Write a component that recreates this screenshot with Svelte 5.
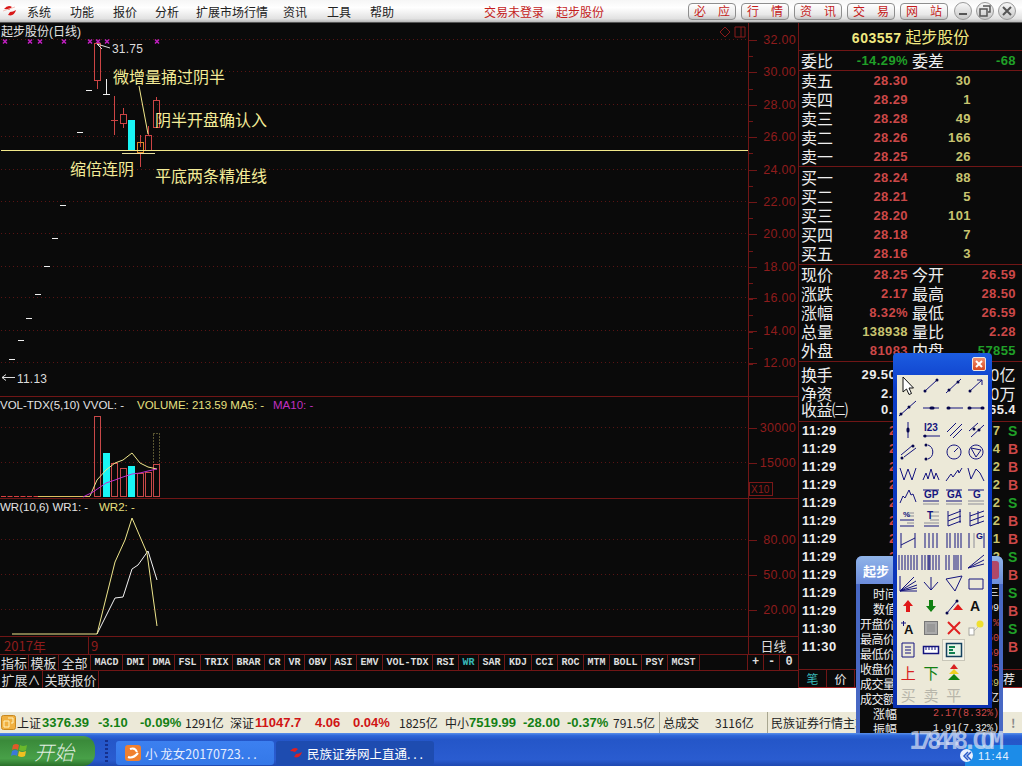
<script>
  // terminal data, positions taken from the screenshot
  const menus = [['系统', 43], ['功能', 43], ['报价', 42], ['分析', 41], ['扩展市场行情', 87], ['资讯', 44], ['工具', 43], ['帮助', 24]];
  const linkBtns = ['必　应', '行　情', '资　讯', '交　易', '网　站'];

  const priceAxis = [
    ['32.00', 40], ['30.00', 72], ['28.00', 105], ['26.00', 137], ['24.00', 170], ['22.00', 202],
    ['20.00', 234], ['18.00', 267], ['16.00', 298], ['14.00', 331], ['12.00', 363],
    ['30000', 428], ['15000', 463], ['80.00', 540], ['50.00', 575], ['20.00', 610]
  ];
  const axisTicks = [];
  for (let y = 40; y <= 380; y += 16.2) axisTicks.push(Math.round(y));
  const marks = [5, 30, 40, 64, 90, 98, 107, 157];
  const stairs = [[60, 205], [52, 238], [44, 266], [35, 294], [26, 318], [18, 340], [9, 359], [77, 132], [86, 90]];

  const volBars = [
    [94, 416, 0], [103, 453, 1], [111, 463, 0], [120, 468, 0],
    [128, 466, 1], [137, 473, 0], [145, 472, 0], [153, 464, 0]
  ];

  const tabs = [
    ['指标', 29, 'zh'], ['模板', 30, 'zh'], ['全部', 32, 'zh'], ['MACD', 32], ['DMI', 26], ['DMA', 26],
    ['FSL', 26], ['TRIX', 32], ['BRAR', 32], ['CR', 20], ['VR', 20], ['OBV', 26], ['ASI', 26], ['EMV', 26],
    ['VOL-TDX', 50], ['RSI', 26], ['WR', 20, 'on'], ['SAR', 26], ['KDJ', 27], ['CCI', 26], ['ROC', 26],
    ['MTM', 26], ['BOLL', 32], ['PSY', 26], ['MCST', 32]
  ];

  const sells = [['卖五', '28.30', '30'], ['卖四', '28.29', '1'], ['卖三', '28.28', '49'], ['卖二', '28.26', '166'], ['卖一', '28.25', '26']];
  const buys = [['买一', '28.24', '88'], ['买二', '28.21', '5'], ['买三', '28.20', '101'], ['买四', '28.18', '7'], ['买五', '28.16', '3']];
  const info = [
    ['现价', '28.25', 'r', '今开', '26.59', 'r'],
    ['涨跌', '2.17', 'r', '最高', '28.50', 'r'],
    ['涨幅', '8.32%', 'r', '最低', '26.59', 'r'],
    ['总量', '138938', 'y', '量比', '2.28', 'r'],
    ['外盘', '81083', 'r', '内盘', '57855', 'g']
  ];
  const extra = [['换手', '29.50%', '金额', '3.70亿'], ['净资', '2.51', '流通', '4900万'], ['收益㈡', '0.27', '市盈', '65.4']];
  const ticks = [
    ['11:29', '7', 'S'], ['11:29', '4', 'B'], ['11:29', '2', 'B'], ['11:29', '2', 'B'], ['11:29', '2', 'S'],
    ['11:29', '2', 'B'], ['11:29', '1', 'B'], ['11:29', '3', 'S'], ['11:29', '2', 'B'], ['11:29', '5', 'S'],
    ['11:29', '2', 'B'], ['11:30', '3', 'S'], ['11:30', '6', 'B']
  ];

  const status = [
    ['上证', 25, 'k'], ['3376.39', 56, 'g'], ['-3.10', 42, 'g'], ['-0.09%', 45, 'g'], ['1291亿', 45, 'k'],
    ['深证', 25, 'k'], ['11047.7', 60, 'r'], ['4.06', 38, 'r'], ['0.04%', 46, 'r'], ['1825亿', 46, 'k'],
    ['中小', 24, 'k'], ['7519.99', 54, 'g'], ['-28.00', 44, 'g'], ['-0.37%', 46, 'g'], ['791.5亿', 46, 'k']
  ];

  const infoRows = [
    ['时间', '三', 'sub', 'w'], ['数值', '09', 'sub', 'w'], ['开盘价', '%', '', 'r'], ['最高价', '50', '', 'r'], ['最低价', '59', '', 'r'],
    ['收盘价', '25', '', 'r'], ['成交量', '39', '', 'y'], ['成交额', '亿', '', 'w'],
    ['涨幅', '2.17(8.32%)', 'sub', 'r'], ['振幅', '1.91(7.32%)', 'sub', 'w']
  ];

  const N = '#14147e';
  // d = stroke path, dots = heavy end points, t = small label
  const tools = [
    { cursor: true }, { d: 'M4 15L16 4', dots: 'M4 15h0M16 4h0' }, { d: 'M2 17L17 3', dots: 'M5 14h0M14 6h0' }, { d: 'M4 15L16 4M11 4h5v5', dots: 'M4 15h0' },
    { d: 'M1 18L18 3', dots: 'M3 16h0M11 9h0' }, { d: 'M2 10H18', dots: 'M10 10h2' }, { d: 'M5 10H19', dots: 'M4 10h1' }, { d: 'M3 10H17', dots: 'M3 10h1M16 10h1' },
    { d: 'M10 2V18', dots: 'M10 9v2' }, { d: 'M2 16H19', dots: 'M4 16h0', t: 'I23', ty: 11, ts: 10 }, { d: 'M3 12L12 3M6 16L18 4M9 18L18 9' }, { d: 'M3 11L12 3M5 17L18 5', dots: 'M8 9h0M13 10h0' },
    { d: 'M3 13L15 3M6 15L18 6', dots: 'M4 16h0M15 4h0' }, { d: 'M7 3A7.5 7.5 0 0 1 7 17', dots: 'M5 3h0M5 17h0' }, { d: 'M10 3a7 7 0 1 0 .01 0M10 10L14 6' }, { d: 'M10 3a7 7 0 1 0 .01 0M5 6L15 8L10 15Z' },
    { d: 'M2 4L6 16L10 5L14 16L18 4' }, { d: 'M2 16L5 9L7 15L10 5L13 15L15 9L18 16' }, { d: 'M2 17L7 10L9 13L14 6L15 9L18 4' }, { d: 'M2 4L5 15L10 5L14 9L18 17' },
    { d: 'M2 17L5 10L7 12L11 4L13 9L15 8L18 16' }, { d: 'M2 4H18M2 15H18', g: 'M2 18H18', t: 'GP', ty: 12, ts: 10 }, { d: 'M2 4H18M2 15H18', g: 'M2 18H18', t: 'GA', ty: 12, ts: 10 }, { d: 'M2 4H18', g: 'M2 15H18M2 18H18', t: 'G', ty: 12, ts: 10, tx: 7 },
    { d: 'M2 12H16M2 18H16', g: 'M9 5H16M9 8H16M9 15H16', t: '%', ty: 9, ts: 8, tx: 5 }, { d: 'M3 18H18', g: 'M9 4H18M9 8H18M9 12H18M3 15H18', t: 'T', ty: 11, ts: 10, tx: 6 }, { d: 'M4 3V18M16 1V15M4 8L17 3M4 13L17 8M4 18L17 13' }, { d: 'M4 4V18M12 3V16M4 8L18 3M4 13L18 8M4 18L18 13' },
    { d: 'M3 3V18M17 3V18M3 15L17 8' }, { d: 'M4 3V18M8 3V18M12 3V18M16 3V18' }, { d: 'M3 3V18M6 3V18M11 3V18M14 3V18M17 3V18' }, { d: 'M3 3V18M18 3V18', g: 'M8 3V18', t: 'G', ty: 9, ts: 9, tx: 10 },
    { d: 'M1 3V18M4 3V18M7 3V18M10 3V18M13 3V18M16 3V18M19 3V18' }, { d: 'M1 3V18M4 3V18M7 3V18M8 3V18M9 3V18M12 3V18M15 3V18M18 3V18' }, { d: 'M2 3V18M5 3V18M10 3V18M12 3V18M14 3V18M17 3V18' }, { d: 'M2 16L18 3M2 16L18 8M2 16L18 12' },
    { d: 'M2 2V17H19M2 17L16 3M2 17L18 7M2 17L19 11M2 17L19 14' }, { d: 'M10 3V16M3 8L10 16L17 8' }, { d: 'M2 5L18 2L11 17Z' }, { d: 'M3 5H17V15H3Z' },
    { red: 'M10 4L15 10H12V16H8V10H5Z' }, { green: 'M10 16L15 10H12V4H8V10H5Z' }, { d: 'M3 17L13 5', dots: 'M3 17h0M13 5h0', red: 'M14 8L19 14H9Z' }, { t: 'A', ty: 15, ts: 14, tx: 4, dark: true },
    { t: 'A', ty: 16, ts: 13, tx: 6, dark: true, d: 'M3 5H8M5.500 3V8' }, { square: true }, { redline: 'M4 4L16 16M16 4L4 16' }, { bulb: true },
    { d: 'M4 3H16V17H4ZM7 7H13M7 10H13M7 13H13' }, { ruler: true }, { chart: true }, {},
    { zh: '上', c: '#d82020' }, { zh: '下', c: '#128012' }, { arrows: true }, {},
    { zh: '买', c: '#b8b6aa' }, { zh: '卖', c: '#b8b6aa' }, { zh: '平', c: '#b8b6aa' }, {}
  ];
</script>

<div class="app">
  <header class="topbar">
    <svg class="logo" width="16" height="14" viewBox="0 0 16 14"><path d="M2 5Q6 0 10 3L7 6Q4 5 2 5ZM14 6Q12 13 6 11L8 8Q11 8 14 6Z" fill="#d81818"/><path d="M1 7L13 3" stroke="#f4c0b8"/></svg>
    <nav class="menus">
      {#each menus as [m, w]}<span style="width:{w}px">{m}</span>{/each}
    </nav>
    <span class="login">交易未登录</span>
    <span class="login stock">起步股份</span>
    <div class="links">
      {#each linkBtns as b}<span class="link">{b}</span>{/each}
    </div>
    <div class="winbtns">
      <span class="round"><svg width="12" height="12" viewBox="0 0 12 12"><path d="M2 9H10" stroke="#555" stroke-width="2"/></svg></span>
      <span class="round"><svg width="12" height="12" viewBox="0 0 12 12"><path d="M4 1H11V7H9M1 4H8V11H1Z" fill="none" stroke="#555" stroke-width="1.500"/></svg></span>
      <span class="round"><svg width="12" height="12" viewBox="0 0 12 12"><path d="M2 2L10 10M10 2L2 10" stroke="#555" stroke-width="2"/></svg></span>
    </div>
  </header>

  <main class="body">
    <section class="left">
      <svg class="chart" width="798" height="613" viewBox="0 23 798 613">
        <!-- grid -->
        {#each priceAxis as [, y]}
          <path d="M1 {y - 0.5}H748" class="dots"/>
        {/each}
        <path d="M748.500 23V636" class="frame"/>
        <path d="M0 396.500H798M0 498.500H798" class="frame"/>
        {#each axisTicks as y}<path d="M748 {y + 0.5}h5" class="frame"/>{/each}
        {#each priceAxis as [v, y]}
          <path d="M748 {y + 0.5}h9" class="frame"/>
          <text x="796" y={y + 4} text-anchor="end" class="axis">{v}</text>
        {/each}
        <path d="M725 27l5 5-5 5-5-5ZM735 27h10v10h-10ZM741 27v10" fill="none" stroke="#8a1a1a"/>
        <rect x="749.500" y="482.500" width="23" height="13" fill="none" stroke="#7a1818"/>
        <text x="751" y="493" class="axis sm">X10</text>

        <text x="1" y="36" class="title">起步股份(日线)</text>
        {#each marks as x}
          <path d="M{x - 2} 39.500l4 4M{x + 2} 39.500l-4 4" stroke="#c020c0" stroke-width="1.500"/>
        {/each}

        <!-- candles -->
        <g class="up">
          <rect x="94.500" y="43.500" width="6" height="37"/>
          <path d="M97.500 80V89M114.500 96V135M111 120.500H118M123.500 108V114M123.500 123V128M140.500 135V147M140.500 153V167M148.500 126V135M156.500 97V100"/>
          <rect x="120.500" y="114.500" width="6" height="9"/>
          <rect x="137.500" y="142.500" width="6" height="10" class="warm"/>
          <rect x="145.500" y="135.500" width="6" height="15"/>
          <rect x="153.500" y="100.500" width="6" height="27"/>
        </g>
        <rect x="128" y="120" width="7" height="31" fill="#19f5f5"/>
        {#each stairs as [x, y]}<path d="M{x} {y + 0.5}h6" stroke="#eee"/>{/each}
        <path d="M106.500 79V94M103 94.500H110" stroke="#eee"/>
        <path d="M1 150.500H748" stroke="#f2e88a"/>
        <path d="M122 153.500H155" stroke="#e8e0a0"/>
        <path d="M139 86L148 134" stroke="#f2e88a"/>
        <path d="M97 44L102 49M97 44L110 48" stroke="#ddd" fill="none"/>
        <text x="112" y="53" class="price">31.75</text>
        <path d="M2 377.500H15M2 377.500l4-3M2 377.500l4 3" stroke="#ddd" fill="none"/>
        <text x="17" y="383" class="price">11.13</text>

        <text x="113" y="83" class="note">微增量捅过阴半</text>
        <text x="155" y="126" class="note">阴半开盘确认入</text>
        <text x="70" y="175" class="note">缩倍连阴</text>
        <text x="155" y="182" class="note">平底两条精准线</text>

        <!-- volume pane -->
        <text x="0" y="409" class="label">VOL-TDX(5,10) VVOL: -</text>
        <text x="137" y="409" class="label yel">VOLUME: 213.59 MA5: -</text>
        <text x="273" y="409" class="label mag">MA10: -</text>
        <path d="M1 496.500H38" stroke="#d84040" stroke-dasharray="5 1.500"/>
        <path d="M38 496.500H90" stroke="#e0c060"/>
        <rect x="153.500" y="433.500" width="6" height="31" fill="none" stroke="#a8a058" stroke-dasharray="1 2"/>
        {#each volBars as [x, y, down]}
          {#if down}
            <rect x={x} y={y} width="7" height={497 - y} fill="#19f5f5"/>
          {:else}
            <rect x={x + 0.5} y={y + 0.5} width="6" height={496 - y} fill="none" stroke="#c84848"/>
          {/if}
        {/each}
        <polyline points="90,496 97,480 106,470 115,463 123,460 132,453 140,463 148,467 157,469" class="ln yline"/>
        <polyline points="83,497 93,492 106,483 115,480 123,477 132,474 140,473 148,471 157,469" class="ln pline"/>

        <!-- WR pane -->
        <text x="0" y="511" class="label">WR(10,6) WR1: -</text>
        <text x="99" y="511" class="label yel">WR2: -</text>
        <polyline points="97,634 115,598 123,597 132,569 138,565 148,551 157,580" class="ln wline"/>
        <polyline points="12,634 97,634 115,562 125,540 132,518 147,553 157,626" class="ln yline"/>
      </svg>

      <div class="dates">
        <span class="year">2017年</span>
        <span class="month">9</span>
        <span class="period">日线</span>
      </div>
      <div class="tabs">
        {#each tabs as [t, w, kind]}
          <span class="tab {kind || ''}" style="width:{w}px">{t}</span>
        {/each}
        <span class="grow"></span>
        <span class="tab sign">+</span><span class="tab sign">-</span><span class="tab sign last">0</span>
      </div>
      <div class="tabs2">
        <span class="tab zh ext">扩展∧</span>
        <span class="tab zh rel">关联报价</span>
      </div>
    </section>

    <aside class="panel">
      <div class="stock-title"><b>603557</b> 起步股份</div>
      <div class="row ratio">
        <span class="lab">委比</span><span class="num g">-14.29%</span>
        <span class="lab second">委差</span><span class="num g">-68</span>
      </div>
      <div class="book">
        {#each sells as [l, p, q]}
          <div class="row"><span class="lab">{l}</span><span class="num r">{p}</span><span class="qty">{q}</span></div>
        {/each}
      </div>
      <div class="book buy">
        {#each buys as [l, p, q]}
          <div class="row"><span class="lab">{l}</span><span class="num r">{p}</span><span class="qty">{q}</span></div>
        {/each}
      </div>
      <div class="book infos">
        {#each info as [a, b, c, d, e, f]}
          <div class="row">
            <span class="lab">{a}</span><span class="num {c}">{b}</span>
            <span class="lab second">{d}</span><span class="num {f}">{e}</span>
          </div>
        {/each}
      </div>
      <div class="book more">
        {#each extra as [a, b, c, d]}
          <div class="row">
            <span class="lab wide">{a}</span><span class="num w">{b}</span>
            <span class="lab second">{c}</span><span class="num w" class:mixed={/[亿万]/.test(d)}>{d}</span>
          </div>
        {/each}
      </div>
      <div class="ticks">
        {#each ticks as [t, q, side]}
          <div class="tick">
            <span class="time">{t}</span>
            <span class="tprice">28.25</span>
            <span class="tqty">{q}</span>
            <span class="side" class:sell={side === 'S'}>{side}</span>
          </div>
        {/each}
      </div>
      <div class="ptabs">
        <span class="on">笔</span><span>价</span><span class="fill">细</span><span class="fill">势</span><span class="fill">指</span><span class="end">荐</span>
      </div>
    </aside>
  </main>

  <div class="blank"></div>

  <footer class="status">
    <svg class="sicon" width="15" height="15" viewBox="0 0 15 15"><rect x="0.500" y="0.500" width="14" height="14" rx="2" fill="#f0b040" stroke="#c88820"/><path d="M7 3H12V8H10M3 6H8V12H3Z" fill="none" stroke="#fff4c0"/></svg>
    {#each status as [t, w, c]}
      <span class="sitem {c}" style="width:{w}px">{t}</span>
    {/each}
    <span class="ssep total">总成交</span>
    <span class="stotal">3116亿</span>
    <span class="ssep">民族证券行情主站</span>
    <span class="bang">!</span>
  </footer>

  <div class="taskbar">
    <div class="start">
      <svg width="20" height="20" viewBox="0 0 20 20">
        <path d="M3 4Q6 2 9 4L8 9Q5 7 2 9Z" fill="#e05a28"/><path d="M10 4Q13 6 17 4L16 9Q13 11 9 9Z" fill="#6ab82c"/>
        <path d="M2 10Q5 8 8 10L7 15Q4 13 1 15Z" fill="#3c78d8"/><path d="M9 10Q12 12 16 10L15 15Q12 17 8 15Z" fill="#f0c020"/>
      </svg>
      <em>开始</em>
    </div>
    <div class="grip"></div>
    <div class="task">
      <svg width="16" height="16" viewBox="0 0 16 16"><rect width="16" height="16" rx="3" fill="#f08030"/><path d="M3 12Q8 14 13 8M5 4Q10 2 12 7" fill="none" stroke="#fff" stroke-width="2"/></svg>
      <span>小 龙女20170723. . .</span>
    </div>
    <div class="task active">
      <svg width="16" height="14" viewBox="0 0 16 14"><path d="M2 5Q6 0 10 3L7 6Q4 5 2 5ZM14 6Q12 13 6 11L8 8Q11 8 14 6Z" fill="#e02020"/></svg>
      <span>民族证券网上直通. . .</span>
    </div>
    <div class="tray">
      <span class="chev"><svg width="10" height="10" viewBox="0 0 10 10"><path d="M6 1L2 5L6 9M9 1L5 5L9 9" fill="none" stroke="#2a5bc8" stroke-width="1.500"/></svg></span>
      <span class="clock">11:44</span>
    </div>
  </div>

  <!-- floating data window -->
  <div class="infowin">
    <div class="ititle"><b>起步</b><span class="iclose"></span></div>
    <div class="ibody">
      {#each infoRows as [l, v, sub, c]}
        <div class="irow">
          <span class="ilab" class:sub={sub === 'sub'}>{l}</span>
          <span class="ival {c}">{v}</span>
        </div>
      {/each}
    </div>
  </div>

  <!-- floating draw toolbar -->
  <div class="toolwin">
    <div class="tooltitle">
      <span class="toolclose"><svg width="8" height="8" viewBox="0 0 8 8"><path d="M1 1L7 7M7 1L1 7" stroke="#fff" stroke-width="2"/></svg></span>
    </div>
    <div class="toolgrid">
      {#each tools as tool, i}
        <span class="tool" class:picked={i === 50}>
          {#if tool.zh}
            <span class="toolzh" style="color:{tool.c}">{tool.zh}</span>
          {:else}
            <svg width="20" height="20" viewBox="0 0 20 20" fill="none">
              {#if tool.cursor}<path d="M5 1V16L8.500 13L11 18.500L13.500 17.500L11 12H15.500Z" fill="#fff" stroke="#111"/>{/if}
              {#if tool.g}<path d={tool.g} stroke="#8c8c98"/>{/if}
              {#if tool.d}<path d={tool.d} stroke={N}/>{/if}
              {#if tool.dots}<path d={tool.dots} stroke="#06064c" stroke-width="3" stroke-linecap="round"/>{/if}
              {#if tool.t}<text x={tool.tx ?? 3} y={tool.ty} font-size={tool.ts} font-family="'Liberation Sans', sans-serif" font-weight="700" fill={tool.dark ? '#111' : N}>{tool.t}</text>{/if}
              {#if tool.red}<path d={tool.red} fill="#e01818"/>{/if}
              {#if tool.green}<path d={tool.green} fill="#108010"/>{/if}
              {#if tool.redline}<path d={tool.redline} stroke="#e02020" stroke-width="2"/>{/if}
              {#if tool.square}<rect x="3.500" y="3.500" width="13" height="13" fill="#aaa" stroke="#777"/><rect x="6" y="6" width="8" height="8" fill="#999"/>{/if}
              {#if tool.bulb}<path d="M3 18L15 6" stroke="#c0c0b8"/><rect x="3" y="10" width="5" height="7" fill="#fff" stroke="#a8a8a0"/><circle cx="14" cy="6" r="3.500" fill="#f0e030"/>{/if}
              {#if tool.ruler}<rect x="2.500" y="6.500" width="15" height="7" fill="#fff" stroke={N} stroke-width="1.500"/><path d="M5 7V10M8 7V10M11 7V10M14 7V10" stroke={N}/>{/if}
              {#if tool.chart}<rect x="2.500" y="3.500" width="15" height="13" fill="#e8f4e8" stroke="#14405e" stroke-width="1.500"/><path d="M5 7H11M5 10H9M5 13H11" stroke="#108050" stroke-width="2"/>{/if}
              {#if tool.arrows}<path d="M10 2L14 7H6Z" fill="#d82020"/><path d="M10 7L15 12H5Z" fill="#f0d020"/><path d="M10 12L16 18H4Z" fill="#108010"/>{/if}
            </svg>
          {/if}
        </span>
      {/each}
    </div>
  </div>

  <span class="watermark">178448.COM</span>
</div>

<style>
  :global(body) {
    margin: 0;
    background: #000;
  }
  .app {
    position: relative;
    width: 1022px;
    height: 766px;
    overflow: hidden;
    display: flex;
    flex-direction: column;
    font-family: "Liberation Sans", "Noto Sans CJK SC", sans-serif;
    font-size: 12px;
    --line: #701616;
  }

  /* ── Top bar ── */
  .topbar {
    height: 22px;
    flex: none;
    display: flex;
    align-items: center;
    background: linear-gradient(#f6f6f6, #ffffff 35%, #e2e2e2 85%, #b8b8b8);
    border-bottom: 1px solid #555;
    font-family: "Noto Sans CJK SC", sans-serif;
  }
  .logo {
    margin-left: 2px;
    flex: none;
  }
  .menus {
    display: flex;
    margin-left: 9px;
    color: #222;
  }
  .menus span {
    white-space: nowrap;
  }
  .login {
    position: relative;
    color: #c41c1c;
    margin-left: 90px;
  }
  .login.stock {
    margin-left: 12px;
  }
  .links {
    display: flex;
    gap: 5px;
    margin-left: 84px;
  }
  .link {
    width: 46px;
    height: 15px;
    line-height: 14px;
    text-align: center;
    color: #c41c1c;
    background: linear-gradient(#fff, #e8e8e8 70%, #c4c4c4);
    border: 1px solid #8e8e8e;
    border-radius: 4px;
    white-space: nowrap;
  }
  .winbtns {
    display: flex;
    gap: 4px;
    margin-left: 6px;
  }
  .round {
    width: 16px;
    height: 16px;
    display: flex;
    align-items: center;
    justify-content: center;
    border: 1px solid #999;
    border-radius: 50%;
    background: linear-gradient(#f8f8f8, #c8c8c8);
  }

  /* ── Main area ── */
  .body {
    height: 665px;
    flex: none;
    display: flex;
    background: #0a0a0a;
  }
  .left {
    width: 798px;
    flex: none;
    display: flex;
    flex-direction: column;
  }
  .chart {
    display: block;
    flex: none;
  }
  .frame {
    stroke: var(--line);
    fill: none;
  }
  .dots {
    stroke: #5a1414;
    stroke-dasharray: 1 3;
    fill: none;
  }
  .axis {
    fill: #8e1c1c;
    font-size: 12.500px;
    letter-spacing: 0.3px;
  }
  .axis.sm {
    font-size: 10px;
  }
  .title {
    fill: #e4e4e4;
    font-size: 12px;
  }
  .up rect,
  .up path {
    fill: none;
    stroke: #cc4444;
  }
  .up .warm {
    stroke: #e08828;
  }
  .price {
    fill: #dcdcdc;
    font-size: 12px;
    letter-spacing: 0.2px;
  }
  .note {
    fill: #f4ec98;
    font-size: 16px;
    font-family: "Noto Sans CJK SC", sans-serif;
  }
  .label {
    fill: #e4e4e4;
    font-size: 11.500px;
  }
  .yel {
    fill: #e8e080;
  }
  .mag {
    fill: #c030c0;
  }
  .ln {
    fill: none;
  }
  .yline {
    stroke: #eee68c;
  }
  .pline {
    stroke: #c030d0;
  }
  .wline {
    stroke: #f2f2f2;
  }

  /* ── Date axis and tabs ── */
  .dates {
    height: 17px;
    flex: none;
    border-top: 1px solid var(--line);
    display: flex;
    align-items: center;
    position: relative;
    color: #8e1c1c;
    font-size: 13px;
    font-family: "Noto Sans CJK SC", sans-serif;
  }
  .year {
    margin-left: 4px;
    width: 84px;
  }
  .month {
    border-left: 1px solid var(--line);
    height: 17px;
    line-height: 17px;
    padding-left: 2px;
  }
  .period {
    margin-left: auto;
    width: 49px;
    height: 17px;
    line-height: 17px;
    text-align: center;
    color: #ddd;
    border-left: 1px solid var(--line);
  }
  .tabs {
    height: 15px;
    flex: none;
    display: flex;
    border-top: 1px solid var(--line);
  }
  .tab {
    box-sizing: border-box;
    border-right: 1px solid var(--line);
    color: #ddd;
    text-align: center;
    line-height: 15px;
    font-family: "Liberation Mono", monospace;
    font-size: 10px;
    font-weight: 700;
    white-space: nowrap;
  }
  .tab.zh {
    font-family: "Noto Sans CJK SC", sans-serif;
    font-size: 13px;
    font-weight: 400;
  }
  .tab.on {
    color: #38b8b8;
  }
  .grow {
    flex: 1;
    border-right: 1px solid var(--line);
  }
  .sign {
    width: 16px;
    font-size: 12px;
  }
  .sign.last {
    width: 18px;
    border-right: none;
  }
  .tabs2 {
    height: 17px;
    flex: none;
    display: flex;
    border-top: 1px solid var(--line);
    border-bottom: 1px solid #a02020;
  }
  .tabs2 .tab {
    line-height: 17px;
  }
  .ext {
    width: 43px;
  }
  .rel {
    width: 56px;
  }

  /* ── Right panel ── */
  .panel {
    flex: 1;
    min-width: 0;
    border-left: 1px solid var(--line);
    display: flex;
    flex-direction: column;
    font-family: "Noto Sans CJK SC", sans-serif;
    color: #eee;
  }
  .stock-title {
    height: 27px;
    line-height: 27px;
    text-align: center;
    color: #f0e880;
    font-size: 16px;
    border-bottom: 1px solid var(--line);
  }
  .stock-title b {
    font: 700 14px "Liberation Sans", sans-serif;
    letter-spacing: 0.5px;
  }
  .row {
    height: 19px;
    display: grid;
    grid-template-columns: 34px 73px 40px 68px;
    padding-left: 2px;
    align-items: center;
    line-height: 19px;
  }
  .row.ratio {
    height: 19px;
    border-bottom: 1px solid var(--line);
    box-sizing: content-box;
  }
  .lab {
    font-size: 16px;
    white-space: nowrap;
  }
  .lab.second {
    padding-left: 4px;
  }
  .lab.wide {
    letter-spacing: -0.500px;
  }
  .num {
    text-align: right;
    font: 700 13px "Liberation Sans", sans-serif;
    letter-spacing: 0.4px;
  }
  .num.mixed {
    font: 400 16px "Liberation Sans", "Noto Sans CJK SC", sans-serif;
    white-space: nowrap;
  }
  .r { color: #cc4848; }
  .g { color: #20a028; }
  .y { color: #c8c470; }
  .w { color: #ececec; }
  .qty {
    grid-column: 3 / 3;
    text-align: right;
    font: 700 13px "Liberation Sans", sans-serif;
    letter-spacing: 0.4px;
    color: #c8c470;
    width: 63px;
  }
  .book {
    flex: none;
  }
  .book.buy {
    border-top: 1px solid var(--line);
    padding: 1px 0;
  }
  .book.infos {
    border-top: 1px solid var(--line);
    padding-bottom: 1px;
  }
  .book.more {
    border-top: 1px solid var(--line);
    padding-bottom: 2px;
    border-bottom: 1px solid var(--line);
  }
  .ticks {
    flex: 1;
    overflow: hidden;
  }
  .tick {
    height: 18px;
    display: flex;
    font: 700 13px/18px "Liberation Sans", sans-serif;
    position: relative;
  }
  .time {
    margin-left: 3px;
    width: 87px;
    color: #eee;
    letter-spacing: 0.4px;
  }
  .tprice {
    color: #cc4848;
    width: 50px;
  }
  .tqty {
    width: 61px;
    text-align: right;
    color: #c8c470;
  }
  .side {
    margin-left: 8px;
    color: #cc4848;
    font-size: 14px;
  }
  .side.sell {
    color: #20a028;
  }
  .ptabs {
    height: 17px;
    flex: none;
    display: flex;
    border-top: 1px solid var(--line);
    border-bottom: 1px solid #a02020;
    font-size: 12px;
    line-height: 17px;
  }
  .ptabs span {
    width: 27px;
    text-align: center;
    border-right: 1px solid var(--line);
  }
  .ptabs .on {
    color: #38b8b8;
  }
  .ptabs .end {
    margin-left: auto;
    border: none;
    width: 12px;
    padding-right: 7px;
  }

  /* ── Bottom strips ── */
  .blank {
    height: 24px;
    flex: none;
    background: #fff;
  }
  .status {
    height: 21px;
    flex: none;
    display: flex;
    align-items: center;
    background: #ece9d8;
    font-family: "Noto Sans CJK SC", sans-serif;
    color: #222;
    white-space: nowrap;
    overflow: hidden;
  }
  .sicon {
    margin: 0 1px 0 1px;
    flex: none;
  }
  .sitem {
    flex: none;
  }
  .sitem.g,
  .sitem.r {
    font: 700 13px "Liberation Sans", sans-serif;
    text-align: left;
  }
  .sitem.g { color: #148014; }
  .sitem.r { color: #d01414; }
  .sitem.k { color: #222; }
  .ssep {
    border-left: 1px solid #a8a690;
    padding-left: 3px;
    height: 21px;
    line-height: 21px;
    flex: none;
  }
  .total {
    width: 52px;
  }
  .stotal {
    width: 52px;
    flex: none;
  }
  .bang {
    position: absolute;
    left: 1011px;
    color: #888;
    font-weight: 700;
  }
  .taskbar {
    height: 33px;
    flex: none;
    display: flex;
    align-items: flex-end;
    background: linear-gradient(#5a90ea, #2e66d8 8%, #2456c8 20%, #2a5cd0 80%, #1e48b0);
  }
  .start {
    width: 95px;
    height: 30px;
    display: flex;
    align-items: center;
    gap: 4px;
    padding-left: 10px;
    box-sizing: border-box;
    background: linear-gradient(#4c9c4c, #3a8a3a 15%, #48a048 75%, #2a702a);
    border-radius: 0 12px 12px 0;
    color: #fff;
    flex: none;
  }
  .start em {
    font: italic 300 20px "Noto Sans CJK SC", sans-serif;
    opacity: 0.85;
  }
  .grip {
    width: 3px;
    height: 22px;
    margin: 0 8px 4px 10px;
    background: repeating-linear-gradient(#16308c 0 2px, transparent 2px 4px);
    flex: none;
  }
  .task {
    width: 158px;
    height: 24px;
    margin: 0 2px 1px 0;
    display: flex;
    align-items: center;
    gap: 4px;
    padding-left: 9px;
    box-sizing: border-box;
    flex: none;
    background: linear-gradient(#3c80f0, #3478e8);
    border-radius: 3px;
    color: #e4ecff;
    font-size: 12.500px;
    white-space: nowrap;
    font-family: "Noto Sans CJK SC", sans-serif;
  }
  .task.active {
    background: #1e4cb0;
    color: #fff;
    padding-left: 12px;
    gap: 3px;
  }
  .tray {
    margin-left: auto;
    width: 57px;
    height: 21px;
    display: flex;
    align-items: center;
    gap: 5px;
    background: #1c8ce8;
    color: #e4f0ff;
    font-size: 11px;
    letter-spacing: 1px;
    position: relative;
  }
  .chev {
    width: 13px;
    height: 13px;
    margin-left: -5px;
    background: #e8f0ff;
    border-radius: 50%;
    display: flex;
    align-items: center;
    justify-content: center;
    flex: none;
  }

  /* ── Floating windows ── */
  .infowin {
    position: absolute;
    left: 856px;
    top: 556px;
    width: 147px;
    height: 177px;
    display: flex;
    flex-direction: column;
    background: #4868c4;
    border-radius: 6px 6px 0 0;
  }
  .ititle {
    height: 28px;
    flex: none;
    display: flex;
    align-items: center;
    padding-left: 7px;
    color: #fff;
    font-size: 13px;
    font-family: "Noto Sans CJK SC", sans-serif;
    background: linear-gradient(#90b4e8, #6c8cdc);
    border-radius: 6px 6px 0 0;
  }
  .iclose {
    position: absolute;
    right: 4px;
    top: 5px;
    width: 14px;
    height: 18px;
    background: #b04868;
    border-radius: 3px;
  }
  .ibody {
    flex: 1;
    margin: 0 4px;
    padding-top: 2px;
    background: #0a0a0a;
    overflow: hidden;
  }
  .irow {
    height: 15px;
    display: flex;
    justify-content: space-between;
    line-height: 15px;
    color: #eee;
    font-family: "Noto Sans CJK SC", sans-serif;
  }
  .ilab {
    letter-spacing: -0.500px;
  }
  .ilab.sub {
    padding-left: 13px;
    letter-spacing: 0;
  }
  .ival {
    font-family: "Liberation Mono", "Noto Sans CJK SC", monospace;
    font-size: 10px;
    white-space: nowrap;
  }
  .toolwin {
    position: absolute;
    left: 893px;
    top: 353px;
    width: 99px;
    height: 355px;
    box-sizing: border-box;
    padding: 0 4px 4px;
    background: linear-gradient(#1c5ce0, #0c3cc8 10%, #0a30b0);
    border-radius: 4px 4px 0 0;
    display: flex;
    flex-direction: column;
  }
  .tooltitle {
    height: 22px;
    flex: none;
    display: flex;
    align-items: center;
    justify-content: flex-end;
    padding-right: 2px;
  }
  .toolclose {
    width: 12px;
    height: 12px;
    display: flex;
    align-items: center;
    justify-content: center;
    background: linear-gradient(#f09070, #d84820);
    border: 1px solid #f0e8e0;
    border-radius: 2px;
  }
  .toolgrid {
    flex: 1;
    display: grid;
    grid-template-columns: repeat(4, 22.700px);
    grid-auto-rows: 22px;
    align-content: start;
    background: #ece9d8;
  }
  .tool {
    display: flex;
    align-items: center;
    justify-content: center;
    box-sizing: border-box;
    min-width: 0;
  }
  .tool svg {
    flex: none;
  }
  .tool.picked {
    border: 1px solid #c8c6b8;
    background: #f4f2e8;
  }
  .toolzh {
    font: 400 15px "Noto Sans CJK SC", sans-serif;
  }
  .watermark {
    position: absolute;
    left: 909px;
    top: 727px;
    color: rgba(220, 228, 245, 0.7);
    font: 700 24px "DejaVu Sans Mono", monospace;
    letter-spacing: -5.500px;
    pointer-events: none;
  }
</style>
